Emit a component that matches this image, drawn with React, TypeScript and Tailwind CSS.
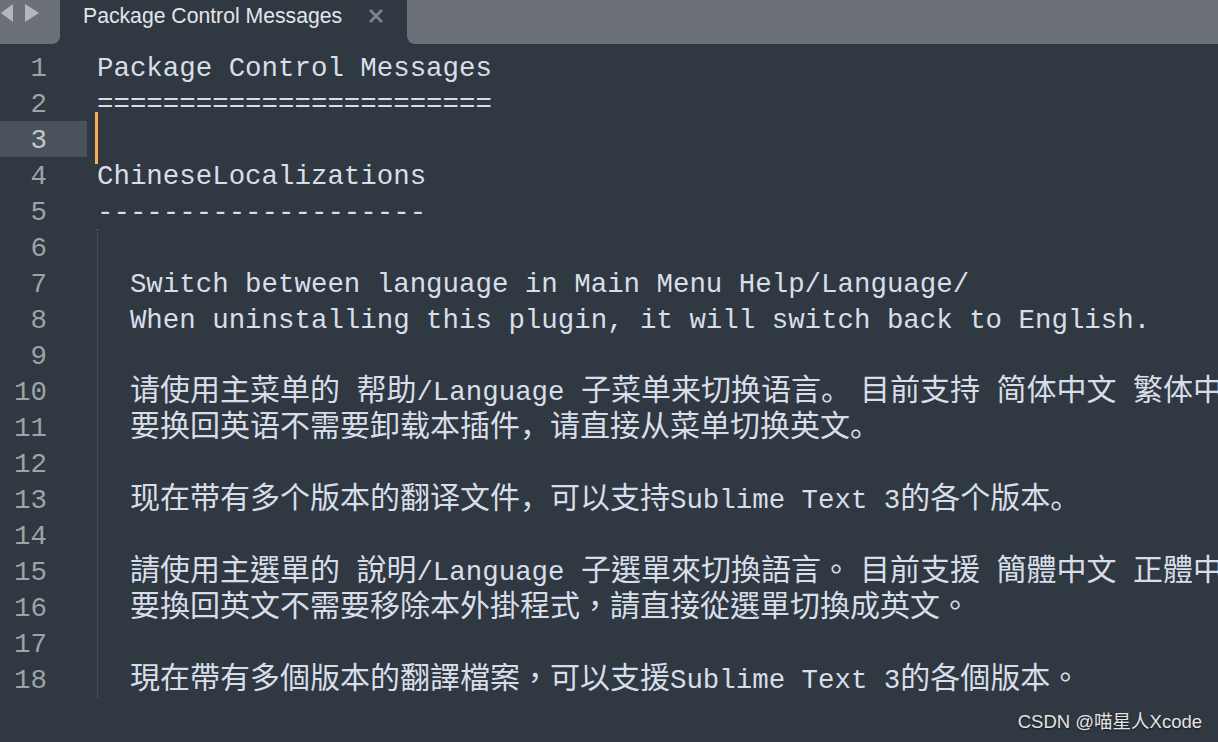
import React from "react";

type Line = { text: string; tc?: boolean };

const lines: Line[] = [
  { text: "Package Control Messages" },
  { text: "========================" },
  { text: "" },
  { text: "ChineseLocalizations" },
  { text: "--------------------" },
  { text: "" },
  { text: "  Switch between language in Main Menu Help/Language/" },
  { text: "  When uninstalling this plugin, it will switch back to English." },
  { text: "" },
  { text: "  请使用主菜单的 帮助/Language 子菜单来切换语言。|目前支持 简体中文 繁体中文 日本語" },
  { text: "  要换回英语不需要卸载本插件，请直接从菜单切换英文。" },
  { text: "" },
  { text: "  现在带有多个版本的翻译文件，可以支持Sublime Text 3的各个版本。" },
  { text: "" },
  { text: "  請使用主選單的 說明/Language 子選單來切換語言。|目前支援 簡體中文 正體中文 日本語", tc: true },
  { text: "  要換回英文不需要移除本外掛程式，請直接從選單切換成英文。", tc: true },
  { text: "" },
  { text: "  現在帶有多個版本的翻譯檔案，可以支援Sublime Text 3的各個版本。", tc: true },
];

function Seg({ text, tc }: Line) {
  const parts = text.split(/([\u3000-\u303f\u3400-\u9fff\uff00-\uffef]+|\|)/);
  return (
    <>
      {parts.map((p, i) => {
        if (i % 2 === 0) return <React.Fragment key={i}>{p}</React.Fragment>;
        if (p === "|") return <span key={i} className="inline-block w-[9px]" />;
        return (
          <span
            key={i}
            className={
              tc
                ? "text-[30px] leading-[0] font-['Noto_Sans_CJK_TC',sans-serif]"
                : "text-[30px] leading-[0] font-['Noto_Sans_CJK_SC',sans-serif]"
            }
          >
            {p}
          </span>
        );
      })}
    </>
  );
}

export default function App() {
  return (
    <div className="relative w-[1218px] h-[742px] overflow-hidden bg-[#303841]">
      {/* tab bar */}
      <div className="flex h-[44px] bg-[#303841]">
        <div className="w-[60px] bg-[#6c7179] rounded-br-[8px]">
          <svg width="60" height="44" viewBox="0 0 60 44">
            <polygon points="13,4 13,22 1,13" fill="#b3b7bc" />
            <polygon points="25,4 25,22 39,13" fill="#b3b7bc" />
          </svg>
        </div>
        <div className="w-[347px] flex items-start pl-[23px] pt-[5px]">
          <span className="font-['Liberation_Sans',sans-serif] text-[21.2px] leading-[21px] text-[#e2e6ea]">
            Package Control Messages
          </span>
          <svg className="ml-[26px] mt-[3px]" width="16" height="16" viewBox="0 0 16 16">
            <line x1="2" y1="2" x2="14" y2="14" stroke="#7f858c" strokeWidth="2.8" />
            <line x1="14" y1="2" x2="2" y2="14" stroke="#7f858c" strokeWidth="2.8" />
          </svg>
        </div>
        <div className="flex-1 bg-[#6c7179] rounded-bl-[8px]" />
      </div>

      {/* editor */}
      <div className="flex pt-[5px] font-['Liberation_Mono','Noto_Sans_CJK_SC',monospace] text-[27.43px]">
        <div className="w-[87px] shrink-0">
          {lines.map((_, i) => (
            <div
              key={i}
              className={
                i === 2
                  ? "h-[36px] pt-[2px] leading-[36px] pr-[40px] text-right text-[#c3c8ce] bg-[#4a525b]"
                  : "h-[36px] pt-[2px] leading-[36px] pr-[40px] text-right text-[#9da3a9]"
              }
            >
              {i + 1}
            </div>
          ))}
        </div>
        <div className="flex-1 pl-[10px] text-[#d8dee9] whitespace-pre">
          {lines.map((l, i) => (
            <div key={i} className="h-[36px] pt-[2px] leading-[36px]">
              <Seg text={l.text} tc={l.tc} />
            </div>
          ))}
        </div>
      </div>

      {/* caret */}
      <div className="absolute left-[95px] top-[112px] w-[3px] h-[52px] bg-[#f9ae58]" />
      {/* indent guide */}
      <div className="absolute left-[97px] top-[229px] h-[468px] border-l border-dotted border-[#59616b]" />

      {/* watermark */}
      <div className="absolute right-[16px] bottom-[11px] font-['Liberation_Sans','Noto_Sans_CJK_SC',sans-serif] text-[18.5px] leading-[18.5px] text-[#e4e4e4] [text-shadow:0_1px_2px_rgba(0,0,0,0.6)]">
        CSDN @喵星人Xcode
      </div>
    </div>
  );
}
